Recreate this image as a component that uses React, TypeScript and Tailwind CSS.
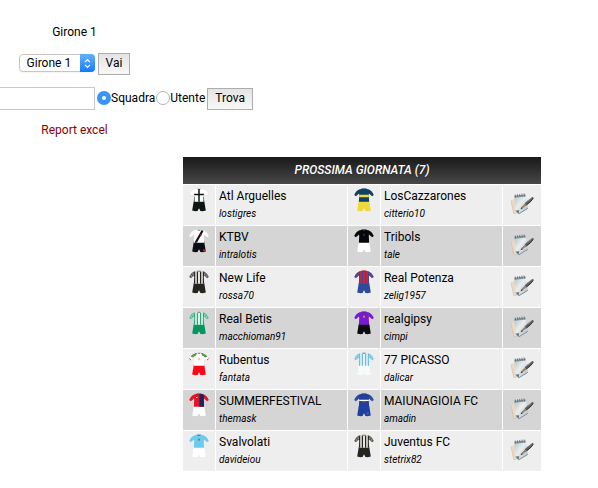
import React, { useId, useState } from 'react';

type Pattern = 'cross' | 'sash' | 'band' | 'stripes' | 'halves' | 'chest' | 'plain' | 'collar';

interface Kit {
  shirt: string;
  sleeve: string;
  shorts: string;
  accent: string;
  pattern: Pattern;
}

interface Team {
  name: string;
  owner: string;
  kit: Kit;
}

const JUVE: Kit = { shirt: '#f1f0ec', sleeve: '#5c5a54', shorts: '#26241f', accent: '#26241f', pattern: 'stripes' };

const matches: [Team, Team][] = [
  [
    { name: 'Atl Arguelles', owner: 'lostigres', kit: { shirt: '#ffffff', sleeve: '#ffffff', shorts: '#0d1413', accent: '#0d1413', pattern: 'cross' } },
    { name: 'LosCazzarones', owner: 'citterio10', kit: { shirt: '#0d4066', sleeve: '#15405c', shorts: '#eed93b', accent: '#eed93b', pattern: 'band' } },
  ],
  [
    { name: 'KTBV', owner: 'intralotis', kit: { shirt: '#ffffff', sleeve: '#fafafa', shorts: '#0c0c18', accent: '#14121a', pattern: 'sash' } },
    { name: 'Tribols', owner: 'tale', kit: { shirt: '#05070b', sleeve: '#05070b', shorts: '#ffffff', accent: '#30343a', pattern: 'plain' } },
  ],
  [
    { name: 'New Life', owner: 'rossa70', kit: JUVE },
    { name: 'Real Potenza', owner: 'zelig1957', kit: { shirt: '#e0202f', sleeve: '#4a4c92', shorts: '#2f4a9a', accent: '#3a4a96', pattern: 'stripes' } },
  ],
  [
    { name: 'Real Betis', owner: 'macchioman91', kit: { shirt: '#f2fbf6', sleeve: '#5cbd95', shorts: '#04965c', accent: '#2ca878', pattern: 'stripes' } },
    { name: 'realgipsy', owner: 'cimpi', kit: { shirt: '#7a1bd2', sleeve: '#7a1bd2', shorts: '#0b0a0c', accent: '#d59a3c', pattern: 'plain' } },
  ],
  [
    { name: 'Rubentus', owner: 'fantata', kit: { shirt: '#ffffff', sleeve: '#ffffff', shorts: '#fb0718', accent: '#5d9440', pattern: 'collar' } },
    { name: '77 PICASSO', owner: 'dalicar', kit: { shirt: '#eef8fc', sleeve: '#7cc3de', shorts: '#f8fbfc', accent: '#6bbbdc', pattern: 'stripes' } },
  ],
  [
    { name: 'SUMMERFESTIVAL', owner: 'themask', kit: { shirt: '#e01528', sleeve: '#d81a2c', shorts: '#ffffff', accent: '#20245c', pattern: 'halves' } },
    { name: 'MAIUNAGIOIA FC', owner: 'amadin', kit: { shirt: '#1f409c', sleeve: '#2a4a9e', shorts: '#1f409c', accent: '#ffffff', pattern: 'chest' } },
  ],
  [
    { name: 'Svalvolati', owner: 'davideiou', kit: { shirt: '#6fcbee', sleeve: '#6fcbee', shorts: '#ffffff', accent: '#3286ac', pattern: 'plain' } },
    { name: 'Juventus FC', owner: 'stetrix82', kit: JUVE },
  ],
];

const KitPattern: React.FC<{ kit: Kit }> = ({ kit }) => {
  switch (kit.pattern) {
    case 'cross':
      return (
        <>
          <path d="M10 1v13M5 6.5h10" stroke={kit.accent} strokeWidth="1.5" />
          <path d="M5.2 8.5v6M14.8 8.5v6" stroke={kit.accent} strokeWidth=".8" />
        </>
      );
    case 'sash':
      return (
        <>
          <path d="M13.6 1.5 6.5 14" stroke={kit.accent} strokeWidth="2.2" />
          <path d="M11.4 5.4l1.4.8" stroke="#d81e2c" strokeWidth="1.5" />
        </>
      );
    case 'band':
      return <path d="M5 8h10" stroke={kit.accent} strokeWidth="2.6" />;
    case 'stripes':
      return <path d="M5.6 1v13M8.4 1.5v12.5M11.6 1.5v12.5M14.4 1v13" stroke={kit.accent} strokeWidth="1.3" />;
    case 'halves':
      return (
        <>
          <path d="M10.4 1H16v13h-5.6z" fill={kit.accent} />
          <path d="M7 4.5h1.5" stroke="#ffffff" strokeWidth="1" />
        </>
      );
    case 'chest':
      return (
        <>
          <path d="M5 7.4h10" stroke={kit.accent} strokeWidth="1.4" />
          <path d="M7.5 8.6h5" stroke="#d8283a" strokeWidth="1.2" />
        </>
      );
    case 'collar':
      return (
        <>
          <path d="M4 1h4l-1 2.4-2.4 1.4zM16 1h-4l1 2.4 2.4 1.4z" fill={kit.accent} />
          <path d="M10 5.8v2.6" stroke="#c9a03c" strokeWidth="1" />
        </>
      );
    default:
      return <path d="M10 4.6v2.4M9.2 5.6h1.6" stroke={kit.accent} strokeWidth="1" />;
  }
};

const KitIcon: React.FC<{ kit: Kit }> = ({ kit }) => {
  const clip = useId();

  return (
    <svg viewBox="0 0 20 24" className="mx-auto block h-6 w-5" aria-hidden="true">
      <clipPath id={clip}>
        <path d="M5.6 1.4 8 .6h4l2.4.8.8 1.6-.4 4 .3 6.8H4.9L5.2 7l-.4-4z" />
      </clipPath>
      <path d="M4.8 12.8h10.4l1.6 9.7c-1.8.7-3.6.9-5.4.6L10.2 20.6h-.4l-1.2 2.5c-1.8.3-3.6.1-5.4-.6z" fill={kit.shorts} />
      <path d="M6 1.3C3.2 2 1.4 4.2.2 6.9l1.7 1.4L5.6 5zM14 1.3c2.8.7 4.6 2.9 5.8 5.6l-1.7 1.4L14.4 5z" fill={kit.sleeve} />
      {kit.pattern === 'stripes' && (
        <path d="M3.4 3.4l1.4 1.8M1.8 5l1.4 2M16.6 3.4l-1.4 1.8M18.2 5l-1.4 2" stroke={kit.shirt} strokeWidth=".6" opacity=".7" />
      )}
      {kit.pattern === 'collar' && (
        <>
          <path d="M5.8 1.4C3.9 1.9 2.6 3 1.6 4.4l2.2 1.2L5.6 4.4zM14.2 1.4c1.9.5 3.2 1.6 4.2 3l-2.2 1.2-1.8-1.2z" fill={kit.accent} />
          <path d="M.3 6.6l1.7 1.5M19.7 6.6l-1.7 1.5" stroke="#e0323a" strokeWidth="1" />
        </>
      )}
      {kit.pattern === 'cross' && (
        <path d="M.4 6.7l1.6 1.4M19.6 6.7l-1.6 1.4" stroke="#b5bab8" strokeWidth=".6" />
      )}
      <g clipPath={`url(#${clip})`}>
        <path d="M4 0h12v14.5H4z" fill={kit.shirt} />
        <KitPattern kit={kit} />
      </g>
      <path d="M7.8.7h4.4L10 2z" fill="#3b3f42" opacity=".75" />
      {kit.pattern === 'sash' && <path d="M14 20.6h2v1.6h-2z" fill="#e02034" />}
      {kit.pattern === 'chest' && <path d="M13 19.6l1.6 1.8M14.6 19.6 13 21.4" stroke="#8fa0d0" strokeWidth=".5" />}
    </svg>
  );
};

const NotepadIcon: React.FC = () => {
  const paper = useId();

  return (
    <svg viewBox="0 0 24 24" className="block size-6" aria-hidden="true">
      <linearGradient id={paper} x1="0" y1="0" x2="1" y2="1">
        <stop offset="0" stopColor="#b4c0c4" />
        <stop offset=".45" stopColor="#e6eef0" />
        <stop offset="1" stopColor="#a3b8c2" />
      </linearGradient>
      <path d="M1 8.6 4.6 6.4l3.8 14-4.6 1.4z" fill="#ecd9c2" />
      <path d="M1 8.6l2.8 13.2 3.4-1" stroke="#cdb396" strokeWidth=".5" fill="none" />
      <path d="M4.2 4 15.6 2.8l2.4 13.6-9.4 5.8-3.2-3.4z" fill={`url(#${paper})`} />
      <path d="M5.4 18.6l3.8-.4-.7 3.8z" fill="#65737a" />
      <path d="M8.8 21.8l9-5.4" stroke="#6f828b" strokeWidth=".8" />
      <path d="M4.2 3.8 15.6 2.5l.3 2L4.6 5.8z" fill="#909da2" />
      <path d="M5.2 2.6l.5 2.8M7.4 2.3l.5 2.8M9.6 2l.5 2.8M11.8 1.7l.5 2.8M14 1.5l.5 2.8" stroke="#56636a" strokeWidth=".8" />
      <path d="M12 14.4l2.8-2.6 1.8 1.4-3 2.4-2.8 1.4z" fill="#a67e5c" />
      <path d="M14.6 11.6 18 8.2l4-3c1-.6 2 .4 1.4 1.3l-3.2 3.7-3.7 3z" fill="#5c5e66" />
      <path d="M16.4 13 20.2 10l3-3.4" stroke="#303238" strokeWidth=".9" fill="none" />
      <path d="M17.6 9.2l3.8-3" stroke="#989ca4" strokeWidth=".7" />
      <path d="M10.4 17.2l1.4-1.9 1 .9z" fill="#2c2927" />
    </svg>
  );
};

const TeamCells: React.FC<{ team: Team }> = ({ team }) => (
  <>
    <td className="border-l border-t border-white pt-[3px] align-top first:border-l-0">
      <KitIcon kit={team.kit} />
    </td>
    <td className="whitespace-nowrap border-l border-t border-white pl-[3px] pt-[3px] align-top">
      <div className="leading-4">{team.name}</div>
      <div className="mt-1 text-[10px] italic leading-3">{team.owner}</div>
    </td>
  </>
);

const buttonClass = 'h-[22px] border border-[#adadad] bg-linear-to-b from-[#e4e4e4] to-[#f8f8f8] px-[7px] pb-0.5';
const radioClass =
  'size-3.5 shrink-0 appearance-none rounded-full border border-[#b4b4b4] bg-white checked:border-5 checked:border-[#3895f5]';

const App: React.FC = () => {
  const [searchBy, setSearchBy] = useState('squadra');

  return (
    <div className="overflow-hidden bg-white font-['Roboto','Liberation_Sans',sans-serif] text-xs text-black">
      <div className="flex w-[149px] flex-col items-center pt-6">
        <div className="leading-4">Girone 1</div>

        <form className="mt-[13px] flex items-start gap-[3px]" onSubmit={(e) => e.preventDefault()}>
          <div className="relative mt-px h-[18px]">
            <select
              aria-label="Girone"
              className="block h-[18px] w-[76px] appearance-none rounded border border-[#c6c6c6] bg-white pl-[7px] text-xs leading-4 shadow-xs"
            >
              <option>Girone 1</option>
            </select>
            <span className="pointer-events-none absolute inset-y-0 right-0 flex w-[15px] items-center justify-center rounded-r bg-linear-to-b from-[#63b0f8] to-[#0a7bfb]">
              <svg viewBox="0 0 8 12" className="h-[11px] w-[7px]" fill="none" stroke="#ffffff" strokeWidth="1.3" aria-hidden="true">
                <path d="M1.2 4.4 4 1.6l2.8 2.8M1.2 7.6 4 10.4l2.8-2.8" />
              </svg>
            </span>
          </div>
          <button type="submit" className={buttonClass}>Vai</button>
        </form>

        <form className="mt-3 flex items-center" onSubmit={(e) => e.preventDefault()}>
          <input type="text" aria-label="Cerca" className="h-[23px] w-[199px] shrink-0 border border-[#c8c8c8] px-1" />
          <label className="ml-0.5 flex items-center pb-px">
            <input
              type="radio"
              name="tipo"
              className={radioClass}
              checked={searchBy === 'squadra'}
              onChange={() => setSearchBy('squadra')}
            />
            Squadra
          </label>
          <label className="ml-px flex items-center pb-px">
            <input
              type="radio"
              name="tipo"
              className={radioClass}
              checked={searchBy === 'utente'}
              onChange={() => setSearchBy('utente')}
            />
            Utente
          </label>
          <button type="submit" className={`${buttonClass} ml-0.5`}>Trova</button>
        </form>

        <a href="#report" className="mt-3 whitespace-nowrap leading-4 text-[#8b0000]">Report excel</a>
      </div>

      <div className="mb-4 ml-[183px] mr-[57px] mt-[19px]">
        <table className="w-full table-fixed border-separate border-spacing-0">
          <colgroup>
            <col className="w-8" />
            <col />
            <col className="w-[33px]" />
            <col className="w-[122px]" />
            <col className="w-[39px]" />
          </colgroup>
          <thead>
            <tr>
              <th colSpan={5} className="h-[27px] bg-linear-to-b from-[#1a1a1a] to-[#484848] pb-px text-center font-medium italic text-white">
                PROSSIMA GIORNATA (7)
              </th>
            </tr>
          </thead>
          <tbody>
            {matches.map(([home, away]) => (
              <tr key={home.name} className="h-[41px] odd:bg-[#eeeeee] even:bg-[#d5d5d5]">
                <TeamCells team={home} />
                <TeamCells team={away} />
                <td className="border-l border-t border-white pb-0.5">
                  <a href="#formazioni" aria-label={`${home.name} - ${away.name}`} className="flex justify-center">
                    <NotepadIcon />
                  </a>
                </td>
              </tr>
            ))}
          </tbody>
        </table>
      </div>
    </div>
  );
};

export default App;
